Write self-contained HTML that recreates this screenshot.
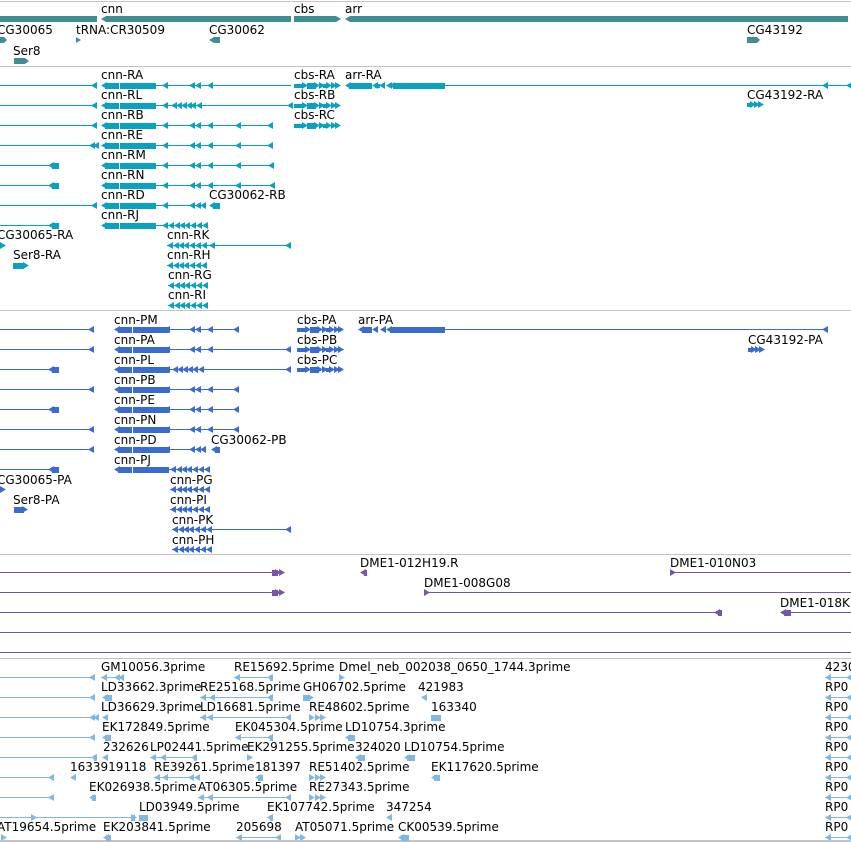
<!DOCTYPE html>
<html><head><meta charset="utf-8"><style>
html,body{margin:0;padding:0;background:#fff;width:851px;height:842px;overflow:hidden}
svg{display:block}
text{font-family:"DejaVu Sans","Liberation Sans",sans-serif;font-size:12px;fill:#000}
</style></head><body>
<svg width="851" height="842" viewBox="0 0 851 842" xmlns="http://www.w3.org/2000/svg">
<defs>
<path id="L" d="M0 .5L6 -3L6 4Z"/>
<path id="R" d="M6 .5L0 -3L0 4Z"/>
<g id="cnnT"><use href="#L"/><rect x="4" y="-2" width="14" height="6"/><rect x="19" y="-2" width="36" height="6"/></g>
<g id="cbsT"><rect x="0" y="-1" width="10" height="4"/><use href="#R" x="8"/><rect x="13" y="-2" width="9" height="6"/><use href="#R" x="20"/><use href="#R" x="25"/><rect x="29" y="-1" width="4" height="4"/><use href="#R" x="32"/><use href="#R" x="37"/><use href="#R" x="41"/></g>
<g id="arrT"><use href="#L"/><rect x="4" y="-2" width="23" height="6"/><use href="#L" x="27"/><rect x="30" y="-1" width="5" height="4"/><use href="#L" x="34"/><use href="#L" x="41"/><use href="#L" x="44"/><rect x="48" y="-2" width="52" height="6"/></g>
<g id="many"><use href="#L"/><rect x="0" y="0" width="40" height="1"/><use href="#L" x="6"/><use href="#L" x="11"/><use href="#L" x="16"/><use href="#L" x="22"/><use href="#L" x="28"/><use href="#L" x="34"/></g>
</defs>

<g fill="#c4c4c4">
<rect x="0" y="1" width="851" height="1"/>
<rect x="0" y="66" width="851" height="1"/>
<rect x="0" y="310" width="851" height="1"/>
<rect x="0" y="554" width="851" height="1"/>
<rect x="0" y="658" width="851" height="1"/>
<rect x="0" y="840" width="851" height="2"/>
</g>

<g fill="#418e92">
<rect x="0" y="16" width="97" height="6"/>
<path d="M101 19L106 16L291 16L291 22L106 22Z"/>
<path d="M294 16L336 16L341 19L336 22L294 22Z"/>
<path d="M345 19L350 16L848 16L848 22L350 22Z"/>
<path d="M0 37L4 37L7 40L4 43L0 43Z"/>
<path d="M76 37L81 40L76 43Z"/>
<path d="M209 40L214 37L220 37L220 43L214 43Z"/>
<path d="M14 58L25 58L29 61L25 64L14 64Z"/>
<path d="M747 37L757 37L760 40L757 43L747 43Z"/>
</g>
<text x="101" y="13">cnn</text>
<text x="294" y="13">cbs</text>
<text x="345" y="13">arr</text>
<text x="-3" y="34">CG30065</text>
<text x="76" y="34">tRNA:CR30509</text>
<text x="209" y="34">CG30062</text>
<text x="747" y="34">CG43192</text>
<text x="13" y="55">Ser8</text>

<g fill="#0aa0c0">
<g transform="translate(0,85)"><rect x="0" y="0" width="97" height="1"/><use href="#L" x="91"/><use href="#cnnT" x="101"/><rect x="155" y="0" width="136" height="1"/><use href="#L" x="162"/><use href="#L" x="189"/><use href="#L" x="195"/><use href="#L" x="207"/><use href="#cbsT" x="294"/><use href="#arrT" x="345"/><rect x="445" y="0" width="406" height="1"/><use href="#L" x="822"/><use href="#L" x="846"/></g>
<g transform="translate(0,105)"><rect x="0" y="0" width="97" height="1"/><use href="#L" x="91"/><use href="#cnnT" x="101"/><rect x="155" y="0" width="136" height="1"/><use href="#L" x="162"/><use href="#L" x="171"/><use href="#L" x="176"/><use href="#L" x="181"/><use href="#L" x="186"/><use href="#L" x="190"/><use href="#L" x="196"/><use href="#L" x="287"/><use href="#cbsT" x="294"/></g>
<g transform="translate(0,125)"><rect x="0" y="0" width="97" height="1"/><use href="#L" x="91"/><use href="#cnnT" x="101"/><rect x="155" y="0" width="118" height="1"/><use href="#L" x="162"/><use href="#L" x="189"/><use href="#L" x="195"/><use href="#L" x="207"/><use href="#L" x="235"/><use href="#L" x="267"/><use href="#cbsT" x="294"/></g>
<g transform="translate(0,145)"><rect x="0" y="0" width="97" height="1"/><use href="#L" x="89"/><use href="#L" x="93"/><use href="#cnnT" x="101"/><rect x="155" y="0" width="118" height="1"/><use href="#L" x="162"/><use href="#L" x="189"/><use href="#L" x="195"/><use href="#L" x="207"/><use href="#L" x="235"/><use href="#L" x="267"/></g>
<g transform="translate(0,165)"><rect x="0" y="0" width="50" height="1"/><use href="#L" x="48"/><rect x="52" y="-2" width="7" height="6"/><use href="#cnnT" x="101"/><rect x="155" y="0" width="119" height="1"/><use href="#L" x="162"/><use href="#L" x="189"/><use href="#L" x="195"/><use href="#L" x="207"/><use href="#L" x="235"/><use href="#L" x="268"/></g>
<g transform="translate(0,185)"><rect x="0" y="0" width="50" height="1"/><use href="#L" x="48"/><rect x="52" y="-2" width="7" height="6"/><use href="#cnnT" x="101"/><rect x="155" y="0" width="120" height="1"/><use href="#L" x="162"/><use href="#L" x="189"/><use href="#L" x="195"/><use href="#L" x="207"/><use href="#L" x="235"/><use href="#L" x="269"/></g>
<g transform="translate(0,205)"><rect x="0" y="0" width="97" height="1"/><use href="#L" x="91"/><use href="#cnnT" x="101"/><rect x="155" y="0" width="50" height="1"/><use href="#L" x="162"/><use href="#L" x="189"/><use href="#L" x="195"/><use href="#L" x="200"/><use href="#L" x="209"/><rect x="213" y="-2" width="7" height="6"/></g>
<g transform="translate(0,225)"><rect x="0" y="0" width="50" height="1"/><use href="#L" x="48"/><rect x="52" y="-2" width="7" height="6"/><use href="#cnnT" x="101"/><rect x="155" y="0" width="12" height="1"/><use href="#L" x="162"/><use href="#many" x="168"/></g>
<g transform="translate(0,245)"><use href="#R" x="0"/><use href="#many" x="167"/><rect x="200" y="0" width="91" height="1"/><use href="#L" x="209"/><use href="#L" x="285"/></g>
<g transform="translate(0,265)"><rect x="13" y="-2" width="11" height="6"/><use href="#R" x="23"/><use href="#many" x="167"/></g>
<g transform="translate(0,285)"><use href="#many" x="168"/></g>
<g transform="translate(0,305)"><use href="#many" x="168"/></g>
<g transform="translate(747,104)"><rect x="0" y="-1" width="5" height="4"/><use href="#R" x="3"/><use href="#R" x="7"/><use href="#R" x="11"/></g>
</g>
<text x="101" y="79">cnn-RA</text><text x="294" y="79">cbs-RA</text><text x="345" y="79">arr-RA</text>
<text x="101" y="99">cnn-RL</text><text x="294" y="99">cbs-RB</text><text x="747" y="99">CG43192-RA</text>
<text x="101" y="119">cnn-RB</text><text x="294" y="119">cbs-RC</text>
<text x="101" y="139">cnn-RE</text>
<text x="101" y="159">cnn-RM</text>
<text x="101" y="179">cnn-RN</text>
<text x="101" y="199">cnn-RD</text><text x="209" y="199">CG30062-RB</text>
<text x="101" y="219">cnn-RJ</text>
<text x="-3" y="239">CG30065-RA</text><text x="167" y="239">cnn-RK</text>
<text x="13" y="259">Ser8-RA</text><text x="167" y="259">cnn-RH</text>
<text x="168" y="279">cnn-RG</text>
<text x="168" y="299">cnn-RI</text>

<g fill="#3a6ccf">
<g transform="translate(0,329)"><rect x="0" y="0" width="93" height="1"/><use href="#L" x="88"/><use href="#cnnT" x="114"/><rect x="168" y="0" width="71" height="1"/><use href="#L" x="164"/><use href="#L" x="189"/><use href="#L" x="195"/><use href="#L" x="207"/><use href="#L" x="233"/><use href="#cbsT" x="297"/><use href="#L" x="358"/><rect x="362" y="-2" width="10" height="6"/><use href="#L" x="372"/><use href="#L" x="380"/><use href="#L" x="386"/><rect x="390" y="-2" width="55" height="6"/><rect x="445" y="0" width="383" height="1"/><use href="#L" x="822"/></g>
<g transform="translate(0,349)"><rect x="0" y="0" width="93" height="1"/><use href="#L" x="88"/><use href="#cnnT" x="114"/><rect x="168" y="0" width="122" height="1"/><use href="#L" x="164"/><use href="#L" x="189"/><use href="#L" x="195"/><use href="#L" x="207"/><use href="#L" x="285"/><use href="#cbsT" x="297"/></g>
<g transform="translate(0,369)"><rect x="0" y="0" width="50" height="1"/><use href="#L" x="48"/><rect x="52" y="-2" width="7" height="6"/><use href="#cnnT" x="114"/><rect x="168" y="0" width="122" height="1"/><use href="#L" x="164"/><use href="#L" x="172"/><use href="#L" x="177"/><use href="#L" x="182"/><use href="#L" x="187"/><use href="#L" x="192"/><use href="#L" x="198"/><use href="#L" x="285"/><use href="#cbsT" x="297"/></g>
<g transform="translate(0,389)"><rect x="0" y="0" width="93" height="1"/><use href="#L" x="88"/><use href="#cnnT" x="114"/><rect x="168" y="0" width="71" height="1"/><use href="#L" x="164"/><use href="#L" x="189"/><use href="#L" x="195"/><use href="#L" x="207"/><use href="#L" x="233"/></g>
<g transform="translate(0,409)"><rect x="0" y="0" width="50" height="1"/><use href="#L" x="48"/><rect x="52" y="-2" width="7" height="6"/><use href="#cnnT" x="114"/><rect x="168" y="0" width="71" height="1"/><use href="#L" x="164"/><use href="#L" x="189"/><use href="#L" x="195"/><use href="#L" x="207"/><use href="#L" x="233"/></g>
<g transform="translate(0,429)"><rect x="0" y="0" width="93" height="1"/><use href="#L" x="88"/><use href="#cnnT" x="114"/><rect x="168" y="0" width="71" height="1"/><use href="#L" x="164"/><use href="#L" x="189"/><use href="#L" x="195"/><use href="#L" x="207"/><use href="#L" x="233"/></g>
<g transform="translate(0,449)"><rect x="0" y="0" width="93" height="1"/><use href="#L" x="88"/><use href="#cnnT" x="114"/><rect x="168" y="0" width="36" height="1"/><use href="#L" x="164"/><use href="#L" x="189"/><use href="#L" x="195"/><use href="#L" x="200"/><use href="#L" x="211"/><rect x="215" y="-2" width="5" height="6"/></g>
<g transform="translate(0,469)"><rect x="0" y="0" width="50" height="1"/><use href="#L" x="48"/><rect x="52" y="-2" width="7" height="6"/><use href="#cnnT" x="114"/><rect x="168" y="0" width="4" height="1"/><use href="#many" x="170"/></g>
<g transform="translate(0,489)"><use href="#R" x="0"/><use href="#many" x="170"/></g>
<g transform="translate(0,509)"><rect x="14" y="-2" width="10" height="6"/><use href="#R" x="22"/><use href="#many" x="170"/></g>
<g transform="translate(0,529)"><use href="#many" x="172"/><rect x="205" y="0" width="86" height="1"/><use href="#L" x="285"/></g>
<g transform="translate(0,549)"><use href="#many" x="172"/></g>
<g transform="translate(748,349)"><rect x="0" y="-1" width="5" height="4"/><use href="#R" x="3"/><use href="#R" x="7"/><use href="#R" x="11"/></g>
</g>
<text x="114" y="324">cnn-PM</text><text x="297" y="324">cbs-PA</text><text x="358" y="324">arr-PA</text>
<text x="114" y="344">cnn-PA</text><text x="297" y="344">cbs-PB</text><text x="748" y="344">CG43192-PA</text>
<text x="114" y="364">cnn-PL</text><text x="297" y="364">cbs-PC</text>
<text x="114" y="384">cnn-PB</text>
<text x="114" y="404">cnn-PE</text>
<text x="114" y="424">cnn-PN</text>
<text x="114" y="444">cnn-PD</text><text x="211" y="444">CG30062-PB</text>
<text x="114" y="464">cnn-PJ</text>
<text x="-3" y="484">CG30065-PA</text><text x="170" y="484">cnn-PG</text>
<text x="13" y="504">Ser8-PA</text><text x="170" y="504">cnn-PI</text>
<text x="172" y="524">cnn-PK</text>
<text x="172" y="544">cnn-PH</text>

<g fill="#7755aa">
<g transform="translate(0,572)"><rect x="0" y="0" width="275" height="1"/><rect x="272" y="-2" width="6" height="6"/><use href="#R" x="275"/><use href="#R" x="279"/><use href="#L" x="360"/><rect x="364" y="-2" width="3" height="6"/><use href="#R" x="670"/><rect x="670" y="0" width="181" height="1"/></g>
<g transform="translate(0,592)"><rect x="0" y="0" width="275" height="1"/><rect x="272" y="-2" width="6" height="6"/><use href="#R" x="275"/><use href="#R" x="279"/><use href="#R" x="424"/><rect x="424" y="0" width="427" height="1"/></g>
<g transform="translate(0,612)"><rect x="0" y="0" width="716" height="1"/><use href="#L" x="714"/><rect x="718" y="-2" width="4" height="6"/><use href="#L" x="780"/><rect x="784" y="-2" width="7" height="6"/><rect x="784" y="0" width="67" height="1"/></g>
<rect x="0" y="632" width="851" height="1"/>
<rect x="0" y="652" width="851" height="1"/>
</g>
<text x="360" y="567">DME1-012H19.R</text><text x="670" y="567">DME1-010N03</text>
<text x="424" y="587">DME1-008G08</text>
<text x="780" y="607">DME1-018K</text>

<g fill="#80b8e0">
<g transform="translate(0,677)"><rect x="0" y="0" width="93" height="1"/><use href="#L" x="89"/><use href="#L" x="101"/><rect x="101" y="0" width="14" height="1"/><use href="#L" x="114"/><use href="#L" x="118"/><use href="#L" x="234"/><rect x="234" y="0" width="39" height="1"/><use href="#L" x="267"/><rect x="270" y="-2" width="3" height="6"/><use href="#R" x="339"/><use href="#L" x="825"/><rect x="825" y="0" width="26" height="1"/><use href="#L" x="846"/></g>
<g transform="translate(0,697)"><rect x="0" y="0" width="93" height="1"/><use href="#L" x="89"/><use href="#L" x="102"/><rect x="105" y="-2" width="7" height="6"/><use href="#L" x="200"/><rect x="200" y="0" width="73" height="1"/><use href="#L" x="209"/><use href="#L" x="267"/><rect x="270" y="-2" width="3" height="6"/><rect x="303" y="-2" width="7" height="6"/><use href="#R" x="308"/><use href="#L" x="421"/><use href="#L" x="825"/><rect x="825" y="0" width="26" height="1"/><use href="#L" x="846"/></g>
<g transform="translate(0,717)"><rect x="0" y="0" width="93" height="1"/><use href="#L" x="89"/><use href="#L" x="93"/><use href="#L" x="102"/><use href="#L" x="200"/><rect x="200" y="0" width="90" height="1"/><use href="#L" x="207"/><use href="#L" x="285"/><use href="#R" x="309"/><use href="#R" x="315"/><use href="#R" x="320"/><rect x="431" y="-2" width="10" height="6"/><use href="#L" x="825"/><rect x="825" y="0" width="26" height="1"/><use href="#L" x="846"/></g>
<g transform="translate(0,737)"><rect x="0" y="0" width="93" height="1"/><use href="#L" x="89"/><use href="#L" x="102"/><rect x="105" y="-2" width="6" height="6"/><use href="#L" x="235"/><rect x="235" y="0" width="38" height="1"/><use href="#L" x="267"/><rect x="270" y="-2" width="3" height="6"/><use href="#L" x="345"/><rect x="348" y="-2" width="7" height="6"/><use href="#L" x="825"/><rect x="825" y="0" width="26" height="1"/><use href="#L" x="846"/></g>
<g transform="translate(0,757)"><rect x="0" y="0" width="95" height="1"/><use href="#L" x="91"/><rect x="94" y="-2" width="2" height="6"/><use href="#L" x="102"/><use href="#L" x="150"/><rect x="150" y="0" width="46" height="1"/><use href="#L" x="160"/><use href="#L" x="191"/><rect x="194" y="-2" width="2" height="6"/><use href="#R" x="247"/><use href="#L" x="355"/><rect x="358" y="-2" width="7" height="6"/><use href="#L" x="404"/><rect x="407" y="-2" width="8" height="6"/><use href="#L" x="825"/><rect x="825" y="0" width="26" height="1"/><use href="#L" x="846"/></g>
<g transform="translate(0,777)"><rect x="0" y="0" width="53" height="1"/><use href="#L" x="48"/><use href="#L" x="70"/><use href="#L" x="154"/><rect x="154" y="0" width="46" height="1"/><use href="#L" x="162"/><use href="#L" x="188"/><use href="#L" x="194"/><use href="#L" x="255"/><rect x="258" y="-2" width="5" height="6"/><use href="#R" x="309"/><use href="#R" x="315"/><use href="#R" x="320"/><use href="#L" x="431"/><rect x="434" y="-2" width="6" height="6"/><use href="#L" x="825"/><rect x="825" y="0" width="26" height="1"/><use href="#L" x="846"/></g>
<g transform="translate(0,797)"><rect x="0" y="0" width="53" height="1"/><use href="#L" x="48"/><use href="#L" x="89"/><rect x="92" y="-2" width="4" height="6"/><use href="#L" x="198"/><rect x="198" y="0" width="92" height="1"/><use href="#L" x="207"/><use href="#L" x="285"/><use href="#R" x="309"/><use href="#R" x="315"/><use href="#R" x="320"/><use href="#L" x="825"/><rect x="825" y="0" width="26" height="1"/><use href="#L" x="846"/></g>
<g transform="translate(0,817)"><rect x="0" y="0" width="135" height="1"/><use href="#R" x="31"/><use href="#R" x="131"/><rect x="131" y="-2" width="4" height="6"/><rect x="139" y="-2" width="9" height="6"/><use href="#L" x="267"/><rect x="270" y="-2" width="3" height="6"/><use href="#L" x="386"/><use href="#L" x="825"/><rect x="825" y="0" width="26" height="1"/><use href="#L" x="846"/></g>
<g transform="translate(0,837)"><use href="#R" x="1"/><use href="#L" x="103"/><rect x="106" y="-2" width="5" height="6"/><use href="#L" x="236"/><rect x="236" y="0" width="44" height="1"/><use href="#L" x="275"/><use href="#R" x="295"/><use href="#R" x="300"/><use href="#L" x="398"/><rect x="401" y="-2" width="8" height="6"/><use href="#L" x="825"/><rect x="825" y="0" width="26" height="1"/><use href="#L" x="846"/></g>
</g>
<text x="101" y="671">GM10056.3prime</text><text x="234" y="671">RE15692.5prime</text><text x="339" y="671">Dmel_neb_002038_0650_1744.3prime</text><text x="825" y="671">4230</text>
<text x="101" y="691">LD33662.3prime</text><text x="200" y="691">RE25168.5prime</text><text x="303" y="691">GH06702.5prime</text><text x="418" y="691">421983</text><text x="825" y="691">RP0</text>
<text x="101" y="711">LD36629.3prime</text><text x="200" y="711">LD16681.5prime</text><text x="309" y="711">RE48602.5prime</text><text x="431" y="711">163340</text><text x="825" y="711">RP0</text>
<text x="102" y="731">EK172849.5prime</text><text x="235" y="731">EK045304.5prime</text><text x="345" y="731">LD10754.3prime</text><text x="825" y="731">RP0</text>
<text x="103" y="751">232626</text><text x="150" y="751">LP02441.5prime</text><text x="247" y="751">EK291255.5prime</text><text x="355" y="751">324020</text><text x="404" y="751">LD10754.5prime</text><text x="825" y="751">RP0</text>
<text x="70" y="771">1633919118</text><text x="154" y="771">RE39261.5prime</text><text x="255" y="771">181397</text><text x="309" y="771">RE51402.5prime</text><text x="431" y="771">EK117620.5prime</text><text x="825" y="771">RP0</text>
<text x="89" y="791">EK026938.5prime</text><text x="198" y="791">AT06305.5prime</text><text x="309" y="791">RE27343.5prime</text><text x="825" y="791">RP0</text>
<text x="139" y="811">LD03949.5prime</text><text x="267" y="811">EK107742.5prime</text><text x="386" y="811">347254</text><text x="825" y="811">RP0</text>
<text x="-3" y="831">AT19654.5prime</text><text x="103" y="831">EK203841.5prime</text><text x="236" y="831">205698</text><text x="295" y="831">AT05071.5prime</text><text x="398" y="831">CK00539.5prime</text><text x="825" y="831">RP0</text>
</svg>
</body></html>
